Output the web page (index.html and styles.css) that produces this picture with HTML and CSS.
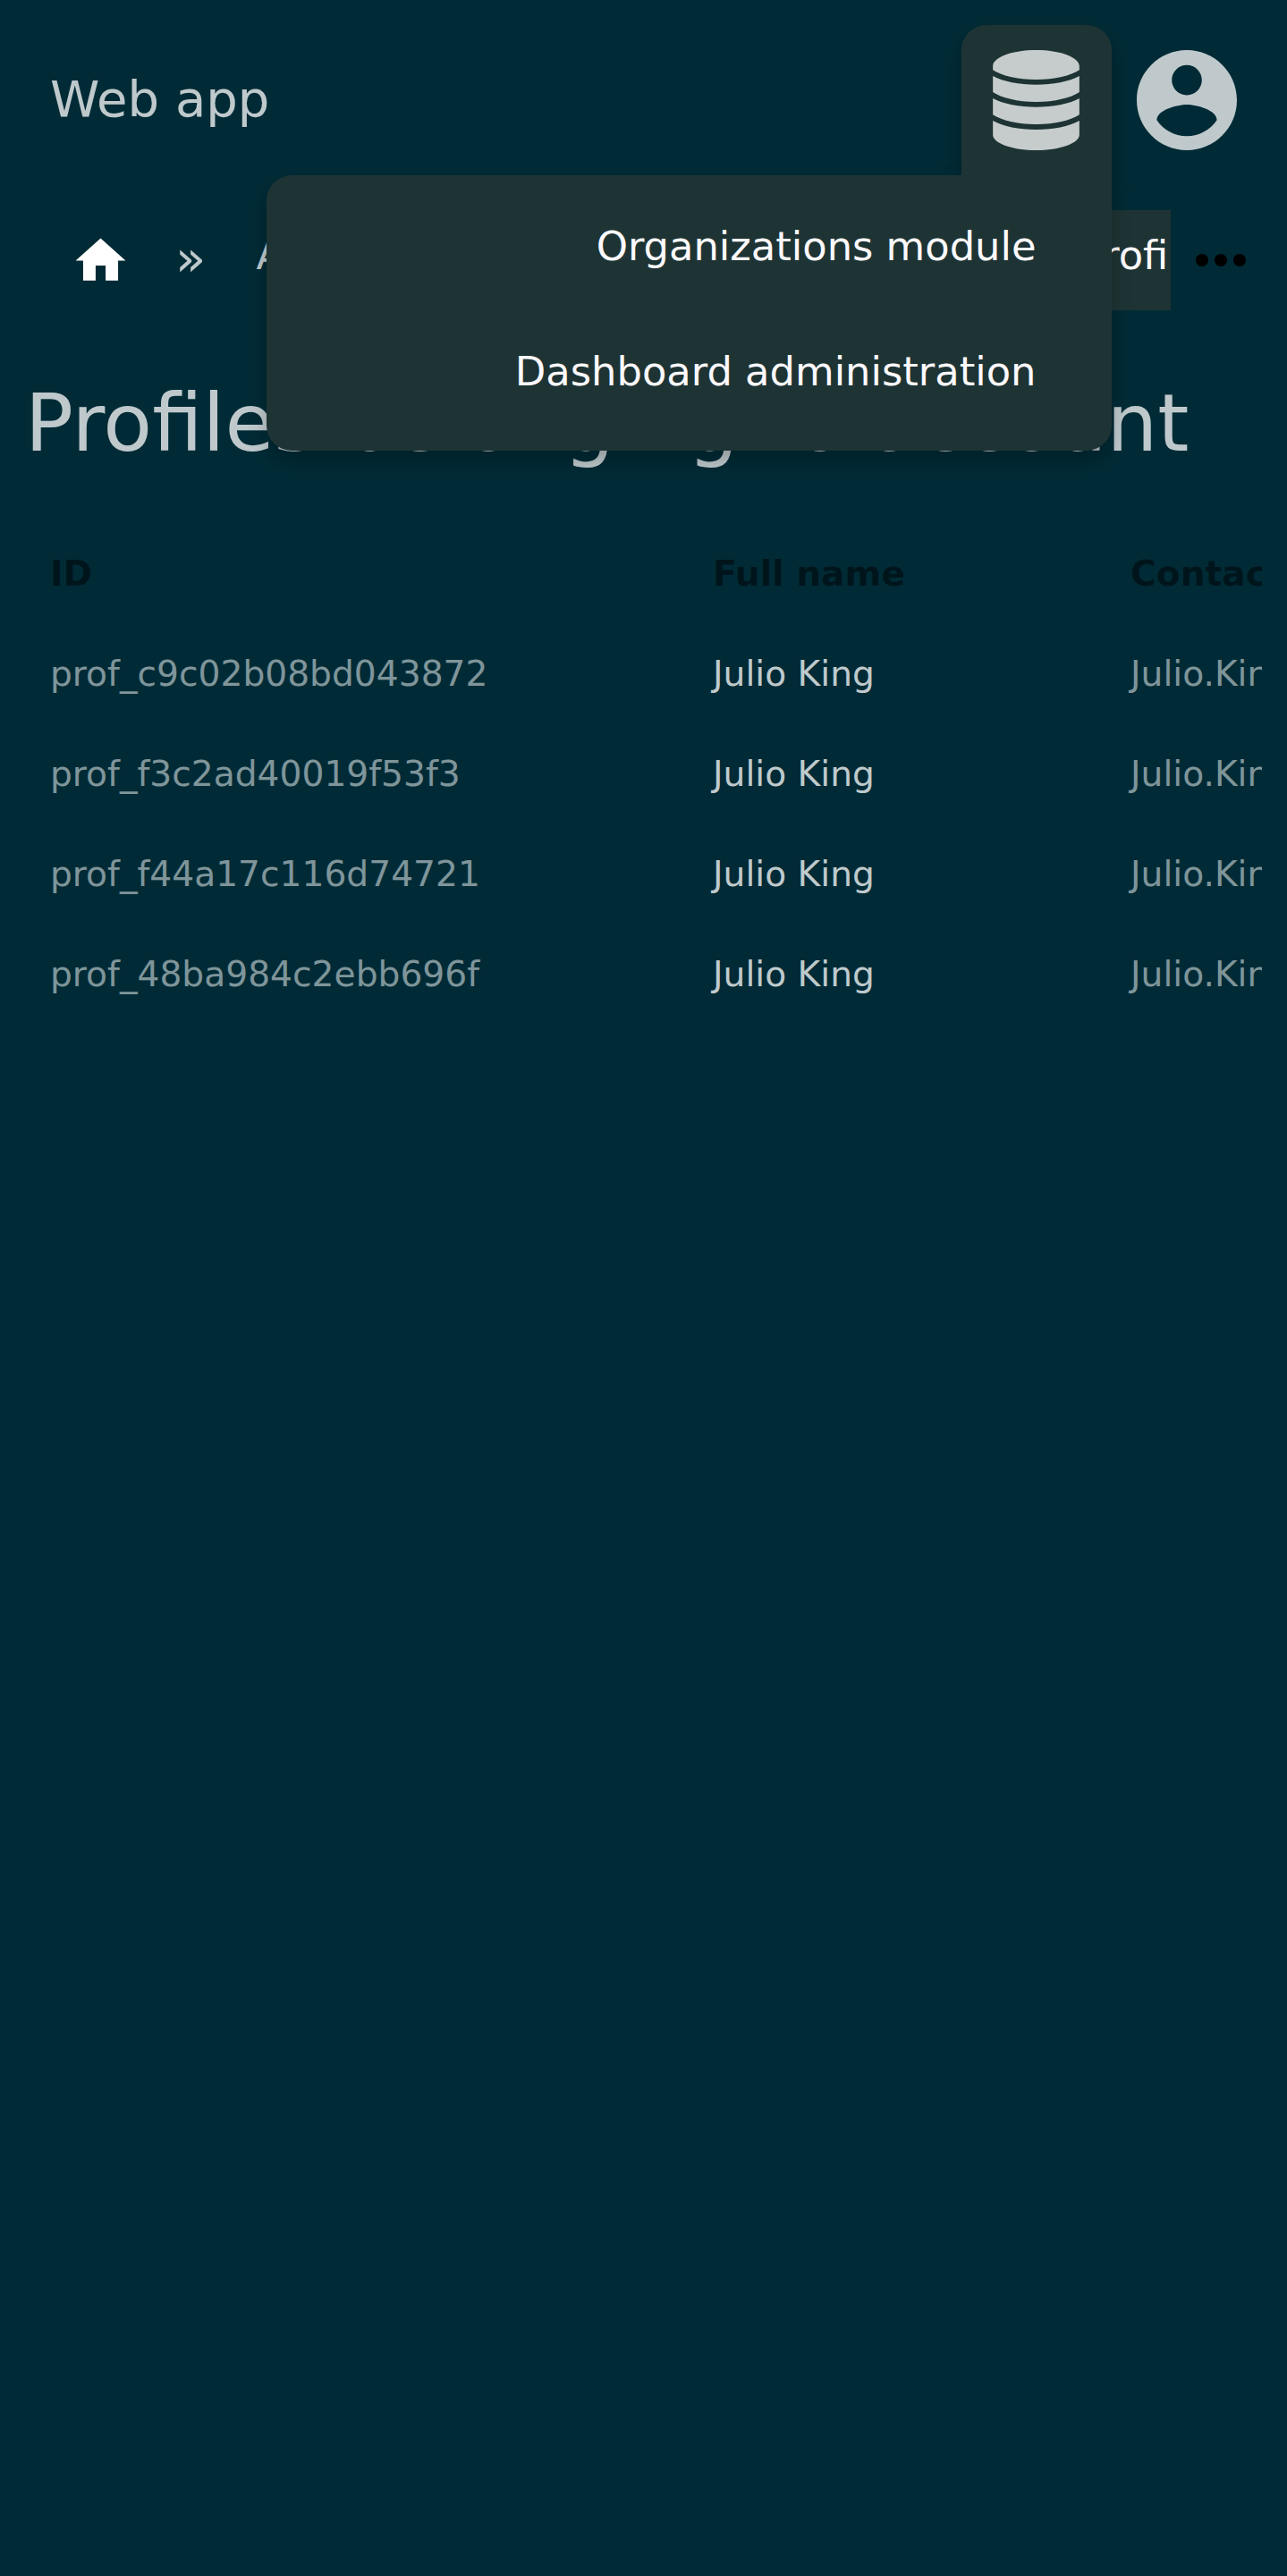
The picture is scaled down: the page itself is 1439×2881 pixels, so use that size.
FILE: index.html
```html
<!DOCTYPE html>
<html lang="en">
<head>
<meta charset="utf-8">
<title>Web app</title>
<link rel="stylesheet" href="styles.css">
</head>
<body>
<header class="header">
  <div class="brand">Web app</div>
  <nav class="actions">
    <div class="menu">
      <button class="menu-tab" aria-label="Modules">
        <svg class="icon-db" viewBox="0 0 290 336"><path d="M0 54C0 24 65 0 145 0S290 24 290 54V67C262 86 207 99 145 99S28 86 0 67ZM0 87C35 106 88 116 145 116S255 106 290 87V141C262 160 207 174 145 174S28 160 0 141ZM0 162C35 181 88 191 145 191S255 181 290 162V217C262 236 207 249 145 249S28 236 0 217ZM0 237C35 257 88 267 145 267S255 257 290 237V284C290 312 225 336 145 336S0 312 0 284Z"/></svg>
      </button>
      <div class="menu-panel">
        <a class="menu-item">Organizations module</a>
        <a class="menu-item">Dashboard administration</a>
      </div>
    </div>
    <svg class="icon-user" viewBox="2 2 20 20"><path d="M12 2C6.48 2 2 6.48 2 12s4.48 10 10 10 10-4.48 10-10S17.52 2 12 2zm0 3c1.66 0 3 1.34 3 3s-1.34 3-3 3-3-1.34-3-3 1.34-3 3-3zm0 14.2c-2.5 0-4.71-1.28-6-3.22.03-1.99 4-3.08 6-3.08 1.99 0 5.97 1.09 6 3.08-1.29 1.94-3.5 3.22-6 3.22z"/></svg>
  </nav>
</header>
<div class="crumb-bar">
  <nav class="crumbs">
    <a class="crumb-home"><svg class="icon-home" viewBox="0 0 24 24"><path d="M10 20v-6h4v6h5v-8h3L12 3 2 12h3v8z"/></svg></a>
    <span class="sep">»</span>
    <a class="crumb crumb-parent">Accounts</a>
    <a class="crumb crumb-active">Profiles</a>
  </nav>
  <svg class="icon-more" viewBox="0 0 24 24"><path d="M6 10c-1.1 0-2 .9-2 2s.9 2 2 2 2-.9 2-2-.9-2-2-2zm12 0c-1.1 0-2 .9-2 2s.9 2 2 2 2-.9 2-2-.9-2-2-2zm-6 0c-1.1 0-2 .9-2 2s.9 2 2 2 2-.9 2-2-.9-2-2-2z"/></svg>
</div>
<h1 class="title">Profiles belonging to account</h1>
<main class="table-wrap">
  <table class="table">
    <thead><tr><th class="col-id">ID</th><th class="col-name">Full name</th><th class="col-contact">Contact</th></tr></thead>
    <tbody>
      <tr><td>prof_c9c02b08bd043872</td><td class="name">Julio King</td><td>Julio.King</td></tr>
      <tr><td>prof_f3c2ad40019f53f3</td><td class="name">Julio King</td><td>Julio.King</td></tr>
      <tr><td>prof_f44a17c116d74721</td><td class="name">Julio King</td><td>Julio.King</td></tr>
      <tr><td>prof_48ba984c2ebb696f</td><td class="name">Julio King</td><td>Julio.King</td></tr>
    </tbody>
  </table>
</main>
</body>
</html>
```
FILE: styles.css
```css
* { box-sizing: border-box; }

html { background: #002b36; }

body {
  margin: 0;
  min-height: 2881px;
  overflow: hidden;
  font-family: "DejaVu Sans", sans-serif;
  font-size: 44.8px;
  color: rgba(255, 255, 255, .75);
}

svg { display: block; fill: currentColor; }

.header {
  display: flex;
  justify-content: space-between;
  height: 224px;
  padding: 28px 56px;
}

.brand { font-size: 56px; line-height: 112px; padding-top: 26.5px; }

.actions { display: flex; gap: 28.5px; }

.menu { position: relative; z-index: 1; width: 168px; }

.menu-tab {
  display: flex;
  justify-content: center;
  width: 168px;
  height: 168px;
  padding: 28px 0;
  border: 0;
  border-radius: 28px 28px 0 0;
  background: #1e3434;
  color: inherit;
  box-shadow: 0 11px 22px rgba(0, 0, 0, .24);
}

.icon-db { width: 97px; height: 112px; }

.menu-panel {
  position: absolute;
  top: 168px;
  right: 0;
  width: 944.5px;
  height: 308px;
  padding: 10px 84px 18px;
  border-radius: 28px 0 28px 28px;
  background: #1e3434;
  box-shadow: 0 11px 22px rgba(0, 0, 0, .24);
}

/* joins the panel to its tab, over the panel's shadow */
.menu-panel::before {
  content: "";
  position: absolute;
  top: -24px;
  right: 0;
  width: 168px;
  height: 48px;
  background: #1e3434;
}

.menu-item {
  display: block;
  line-height: 140px;
  text-align: right;
  color: #fdf9fd;
}

.icon-user { width: 112px; height: 112px; margin-top: 28px; }

.crumb-bar {
  display: flex;
  align-items: center;
  height: 112px;
  margin-top: 11px;
  padding-right: 32px;
}

.crumbs {
  display: flex;
  width: 1309px;
  overflow: hidden;
  line-height: 101px;
}

.crumb-home { flex: none; padding: 23px 33px 0 78.5px; color: #fff; }

.icon-home { width: 67px; height: 67px; }

.sep { flex: none; width: 108px; padding-left: 17.5px; font-size: 56px; line-height: 107px; }

.crumb-parent { flex: none; width: 892.5px; }

.crumb-active {
  flex: none;
  height: 112px;
  padding: 0 28px;
  background: #1e3434;
  color: #fdf9fd;
}

.icon-more { flex: none; width: 84px; height: 84px; margin-left: 14px; color: #000; }

.title {
  margin: 66px 28px 0;
  font-size: 89.6px;
  font-weight: 400;
  line-height: 120px;
  white-space: nowrap;
}

.table-wrap { margin: 53px 28px 0; overflow: hidden; }

.table {
  width: 1700px;
  table-layout: fixed;
  border-collapse: collapse;
  font-size: 39.2px;
}

.table th, .table td {
  height: 112px;
  padding: 0 28px;
  line-height: 50px;
  text-align: left;
}

.table th { color: rgba(0, 0, 0, .5); }

.table td { color: rgba(255, 255, 255, .5); }

.table td.name { color: rgba(255, 255, 255, .75); }

.col-id { width: 741px; }

.col-name { width: 467px; }
```
